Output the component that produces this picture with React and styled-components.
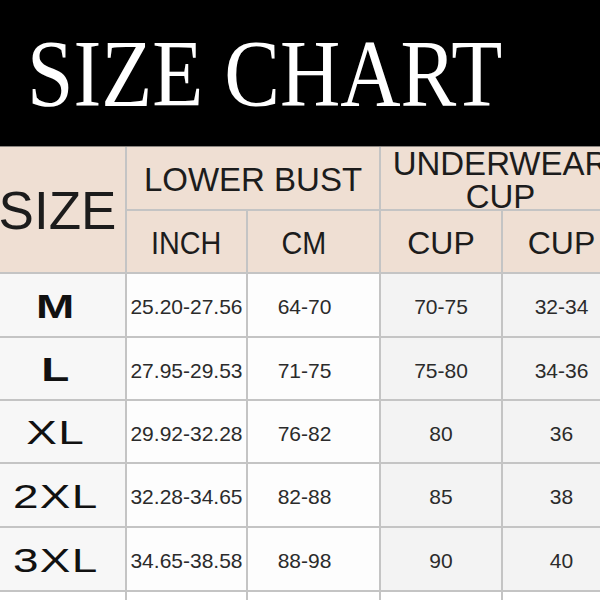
import React from 'react'
import styled, { createGlobalStyle } from 'styled-components'

const GlobalStyle = createGlobalStyle`
  html, body {
    margin: 0;
    padding: 0;
    background: #ffffff;
  }
  #root {
    width: 600px;
    height: 600px;
    overflow: hidden;
  }
`;

const Page = styled.div`
  width: 600px;
  height: 600px;
  overflow: hidden;
  background: #ffffff;
`;

const Banner = styled.header`
  height: 147px;
  background: #000000;
  border-bottom: 1px solid #8a8580;
  box-sizing: border-box;
  padding: 26px 0 0 27px;
`;

const Title = styled.h1`
  display: inline-block;
  margin: 0;
  font-family: "Liberation Serif", "Times New Roman", serif;
  font-weight: 400;
  font-size: 96px;
  line-height: 96px;
  color: #ffffff;
  white-space: nowrap;
  transform: scaleX(0.87);
  transform-origin: left center;
`;

const Table = styled.div`
  display: grid;
  width: 620px;
  grid-template-columns: 125px 119px 131px 120px 117px;
  grid-template-rows: 62px 61px 62px 61px 61px 62px 62px 40px;
  gap: 2px;
  background: #c4c4c4;
  font-family: "Liberation Sans", Arial, sans-serif;
  color: #1c1c1c;
`;

const HeadCell = styled.div`
  background: #efdfd3;
  display: flex;
  align-items: center;
  justify-content: center;
  text-align: center;
  box-sizing: border-box;
  padding: ${p => p.$pad || '0'};
  font-size: ${p => p.$size || 32}px;
  line-height: ${p => p.$lh || 32}px;
  grid-row: ${p => p.$row || 'auto'};
  grid-column: ${p => p.$col || 'auto'};
  overflow: hidden;
  white-space: nowrap;
`;

const Narrow = styled.span`
  display: inline-block;
  transform: scaleX(0.9);
`;

const SizeCell = styled.div`
  background: #f7f7f7;
  display: flex;
  align-items: center;
  justify-content: center;
  padding: 2px 14px 0 0;
`;

const SizeLabel = styled.span`
  display: inline-block;
  font-size: 34px;
  font-weight: ${p => (p.$bold ? 700 : 400)};
  letter-spacing: ${p => (p.$bold ? 0 : 1)}px;
  color: #111111;
  transform: scaleX(1.35);
`;

const DataCell = styled.div`
  background: ${p => (p.$tone === 'grey' ? '#f3f3f3' : '#fdfdfd')};
  display: flex;
  align-items: center;
  justify-content: center;
  padding: 4px ${p => p.$shift || 0}px 0 0;
  font-size: 21px;
  color: #2b2b2b;
  white-space: nowrap;
`;

const FillerCell = styled.div`
  background: #ffffff;
`;

const rows = [
  { size: 'M', bold: true, inch: '25.20-27.56', cm: '64-70', cup: '70-75', band: '32-34' },
  { size: 'L', bold: true, inch: '27.95-29.53', cm: '71-75', cup: '75-80', band: '34-36' },
  { size: 'XL', inch: '29.92-32.28', cm: '76-82', cup: '80', band: '36' },
  { size: '2XL', inch: '32.28-34.65', cm: '82-88', cup: '85', band: '38' },
  { size: '3XL', inch: '34.65-38.58', cm: '88-98', cup: '90', band: '40' },
];

export default function App() {
  return (
    <Page>
      <GlobalStyle />
      <Banner>
        <Title>SIZE CHART</Title>
      </Banner>
      <Table>
        <HeadCell $row="1 / 3" $col="1" $size={53} $lh={56} $pad="2px 10px 0 0">SIZE</HeadCell>
        <HeadCell $col="2 / 4" $size={33} $pad="4px 0 0 0">LOWER BUST</HeadCell>
        <HeadCell $col="4 / 6" $size={33} $lh={33} $pad="4px 0 0 0">
          UNDERWEAR<br />CUP
        </HeadCell>
        <HeadCell $pad="2px 0 0 0"><Narrow>INCH</Narrow></HeadCell>
        <HeadCell $pad="2px 20px 0 0"><Narrow>CM</Narrow></HeadCell>
        <HeadCell $pad="2px 0 0 0">CUP</HeadCell>
        <HeadCell $pad="2px 0 0 0">CUP</HeadCell>
        {rows.map(r => (
          <React.Fragment key={r.size}>
            <SizeCell>
              <SizeLabel $bold={r.bold}>{r.size}</SizeLabel>
            </SizeCell>
            <DataCell>{r.inch}</DataCell>
            <DataCell $shift={18}>{r.cm}</DataCell>
            <DataCell $tone="grey">{r.cup}</DataCell>
            <DataCell $tone="grey">{r.band}</DataCell>
          </React.Fragment>
        ))}
        <FillerCell />
        <FillerCell />
        <FillerCell />
        <FillerCell />
        <FillerCell />
      </Table>
    </Page>
  )
}
